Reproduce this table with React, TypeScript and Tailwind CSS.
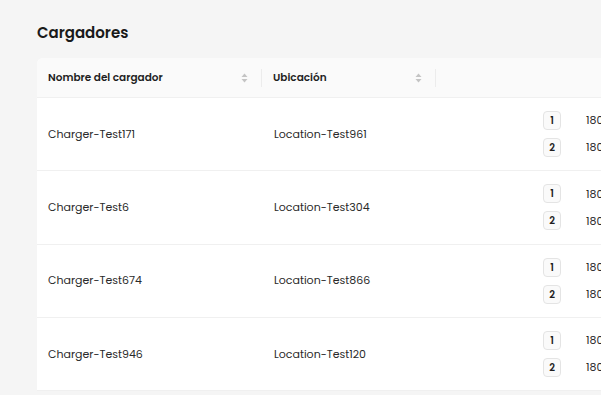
import React from 'react';

type Charger = { name: string; location: string; connectors: { id: number; power: string }[] };

const CHARGERS: Charger[] = [
    { name: 'Charger-Test171', location: 'Location-Test961', connectors: [{ id: 1, power: '180 kW' }, { id: 2, power: '180 kW' }] },
    { name: 'Charger-Test6', location: 'Location-Test304', connectors: [{ id: 1, power: '180 kW' }, { id: 2, power: '180 kW' }] },
    { name: 'Charger-Test674', location: 'Location-Test866', connectors: [{ id: 1, power: '180 kW' }, { id: 2, power: '180 kW' }] },
    { name: 'Charger-Test946', location: 'Location-Test120', connectors: [{ id: 1, power: '180 kW' }, { id: 2, power: '180 kW' }] },
];

function SortIcon() {
    return (
        <svg width="7" height="10" viewBox="0 0 7 10" className="shrink-0">
            <path d="M3.5 0.5 L6.5 4 L0.5 4 Z" fill="#c4c4c4" />
            <path d="M3.5 9.5 L6.5 6 L0.5 6 Z" fill="#c4c4c4" />
        </svg>
    );
}

function HeaderCell({ label, width }: { label: string; width: string }) {
    return (
        <div className={`${width} flex items-center h-full pl-[11px]`}>
            <span className="flex-1 text-[10.5px] font-semibold text-[#1f1f1f]">{label}</span>
            <SortIcon />
            <div className="ml-[13px] w-px h-[18px] bg-[#ececec]" />
        </div>
    );
}

export default function App() {
    return (
        <div
            className="w-[601px] h-[395px] overflow-hidden bg-[#f5f5f5] pl-[37px] pt-[21px]"
            style={{ fontFamily: 'Poppins, "Open Sans", sans-serif' }}
        >
            <h1 className="text-[15px] font-semibold text-[#1a1a1a] leading-[24px] mb-[13px]">Cargadores</h1>
            <div className="w-[700px] bg-white rounded-tl-[6px]">
                <div className="h-[40px] flex items-center bg-[#fafafa] border-b border-[#f0f0f0] rounded-tl-[6px]">
                    <HeaderCell label="Nombre del cargador" width="w-[225px]" />
                    <HeaderCell label="Ubicación" width="w-[174px]" />
                </div>
                {CHARGERS.map((c) => (
                    <div key={c.name} className="h-[73.3px] flex items-center border-b border-[#f0f0f0] text-[11px] text-[#2a2a2a]">
                        <div className="w-[225px] pl-[11px]">{c.name}</div>
                        <div className="w-[174px] pl-[12px]">{c.location}</div>
                        <div className="pl-[107px] flex flex-col gap-[8px]">
                            {c.connectors.map((k) => (
                                <div key={k.id} className="flex items-center gap-[25px]">
                                    <span className="w-[18px] h-[19px] flex items-center justify-center rounded-[4px] border border-[#e4e4e4] bg-[#fafafa] text-[10px] font-semibold text-[#1f1f1f]">
                                        {k.id}
                                    </span>
                                    <span>{k.power}</span>
                                </div>
                            ))}
                        </div>
                    </div>
                ))}
            </div>
        </div>
    );
}
